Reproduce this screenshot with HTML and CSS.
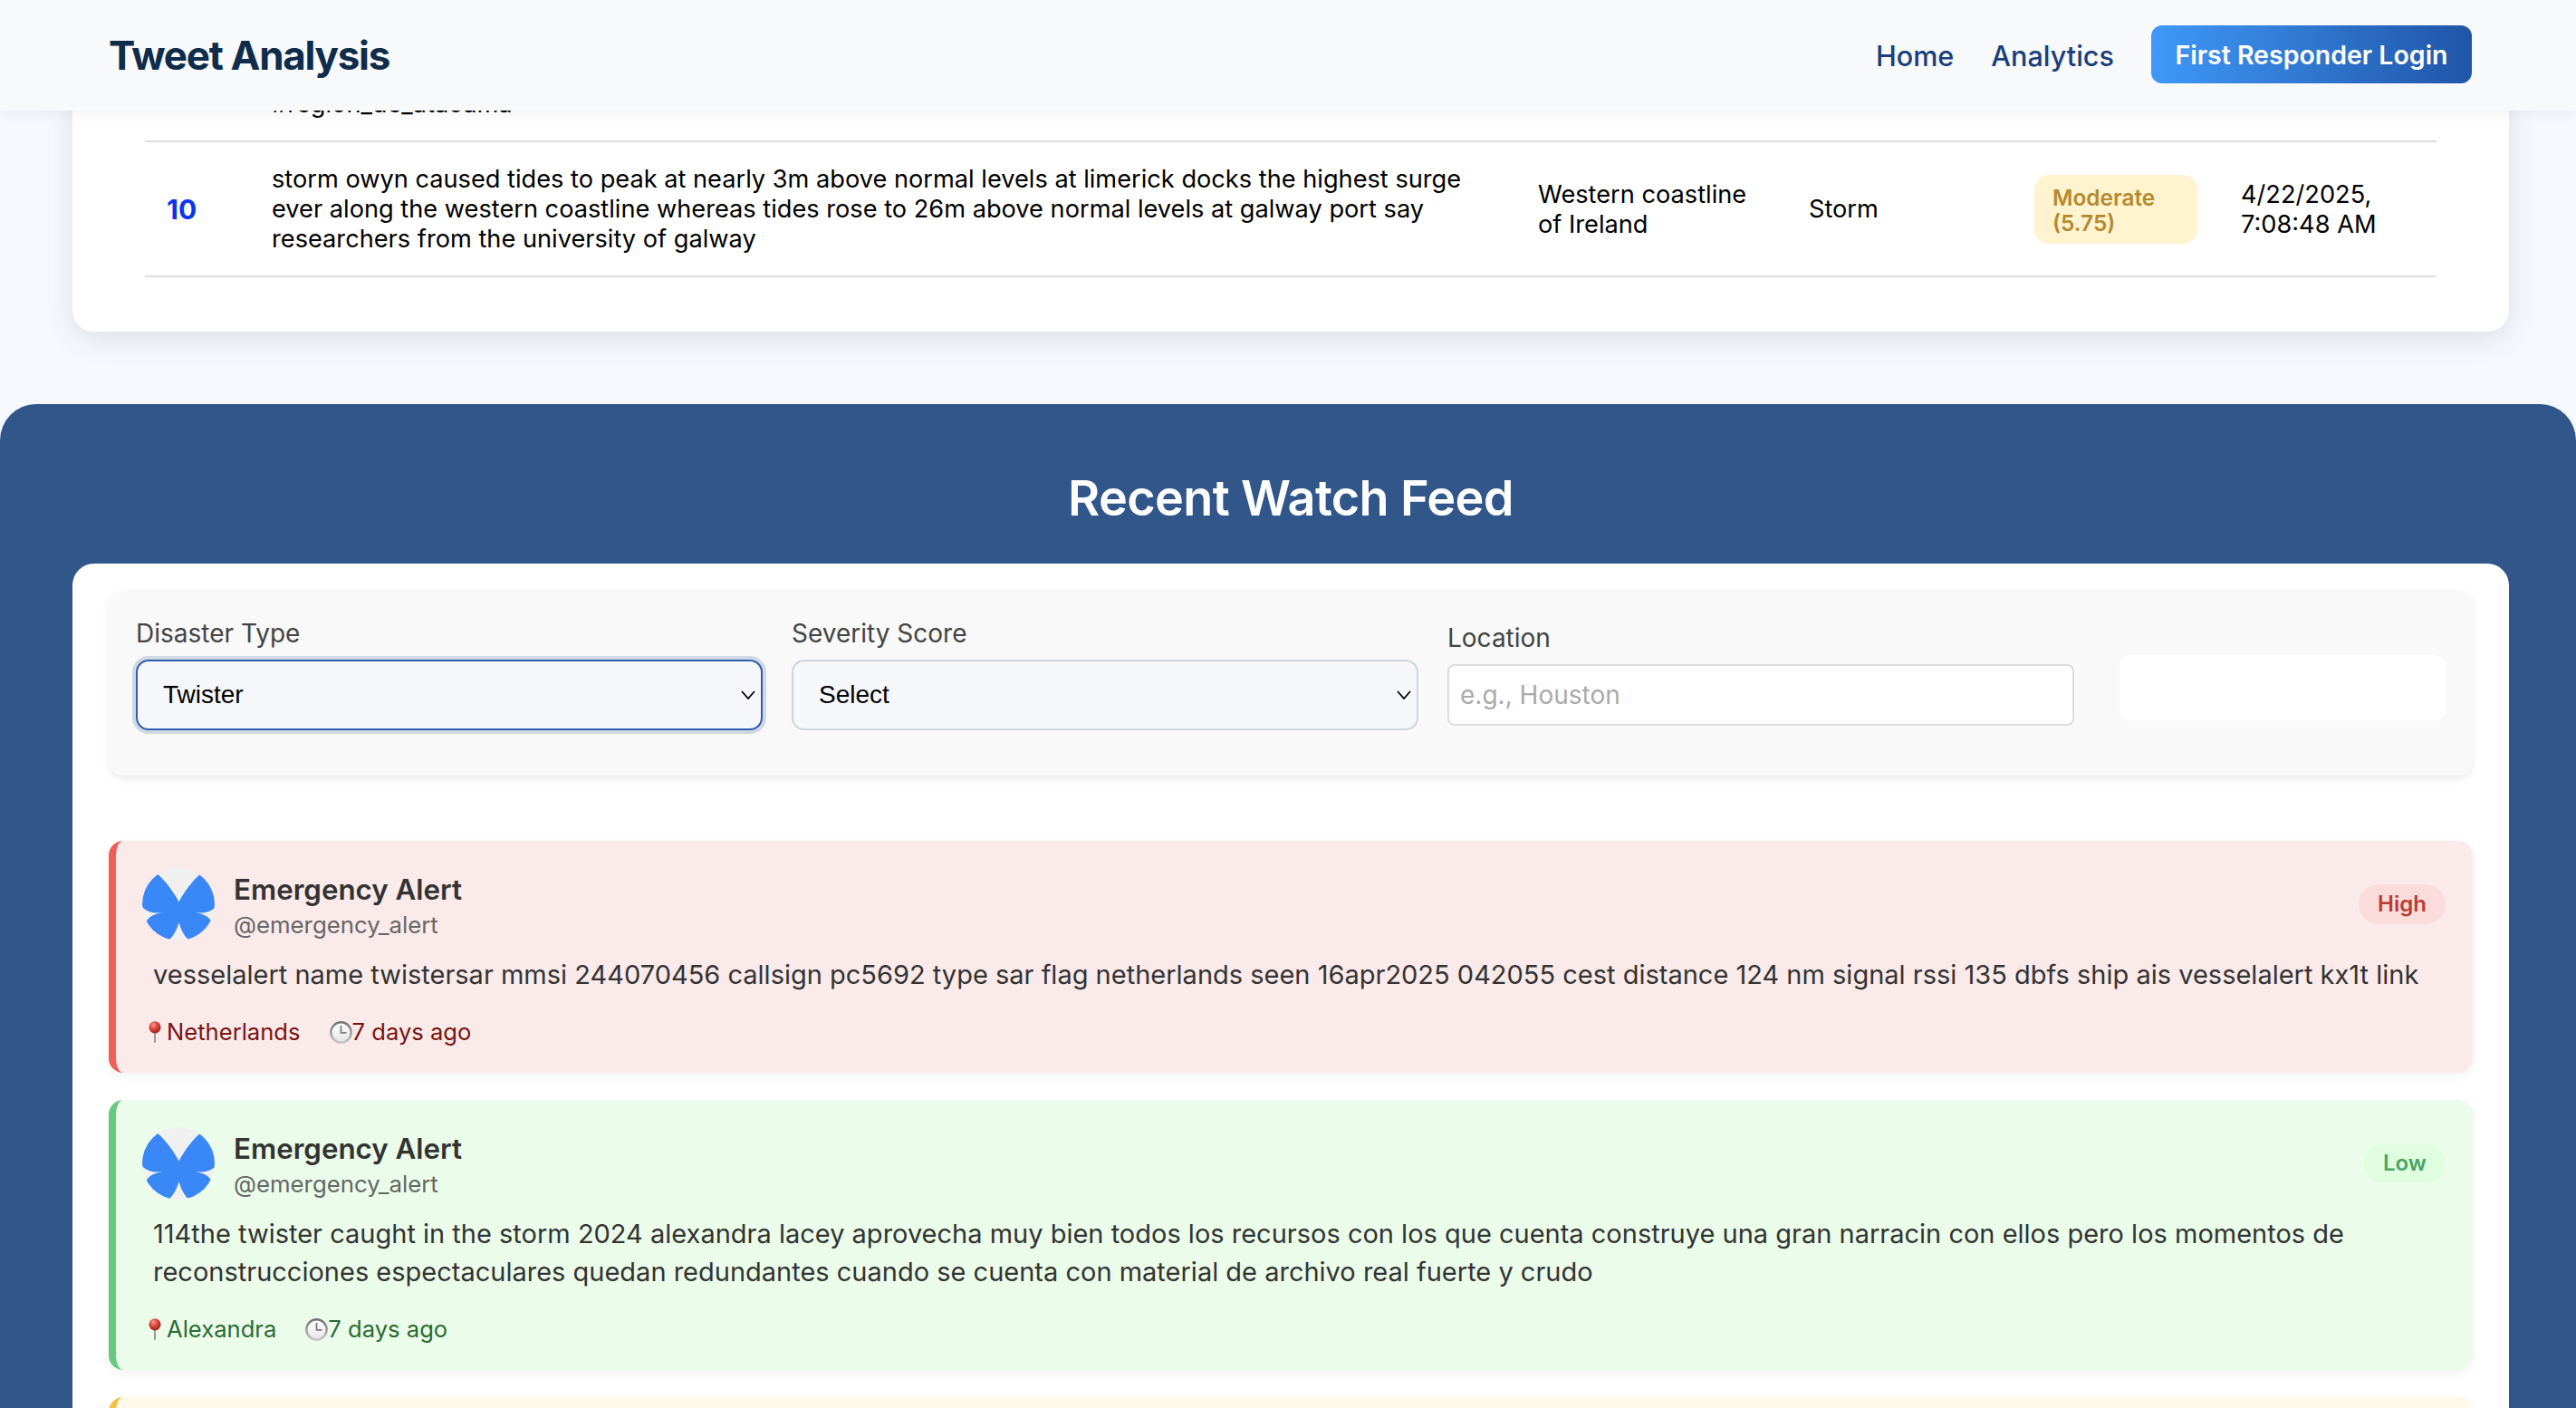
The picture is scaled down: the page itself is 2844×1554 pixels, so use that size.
FILE: index.html
```html
<!DOCTYPE html>
<html lang="en">
<head>
    <meta charset="UTF-8">
    <meta name="viewport" content="width=device-width, initial-scale=1.0">
    <title>Tweet Analysis</title>
    <link rel="stylesheet" href="styles.css">
</head>
<body>
    <svg class="icon-defs" width="0" height="0" aria-hidden="true">
        <defs>
            <radialGradient id="pinHead" cx="38%" cy="32%" r="70%">
                <stop offset="0" stop-color="#f59a8f"/>
                <stop offset="0.5" stop-color="#d9423a"/>
                <stop offset="1" stop-color="#a3231f"/>
            </radialGradient>
            <linearGradient id="clockRing" x1="0" y1="0" x2="0" y2="1">
                <stop offset="0" stop-color="#6f6f6f"/>
                <stop offset="1" stop-color="#c9c9c9"/>
            </linearGradient>
            <linearGradient id="clockFace" x1="0" y1="0" x2="0" y2="1">
                <stop offset="0" stop-color="#ffffff"/>
                <stop offset="1" stop-color="#e6e6e6"/>
            </linearGradient>
            <symbol id="butterfly" viewBox="0 0 600 530">
                <path d="m135.72 44.03c66.496 49.921 138.02 151.14 164.28 205.46 26.262-54.316 97.782-155.54 164.28-205.46 47.98-36.021 125.72-63.892 125.72 24.795 0 17.712-10.155 148.79-16.111 170.07-20.703 73.984-96.144 92.854-163.25 81.433 117.3 19.964 147.14 86.092 82.697 152.22-122.39 125.59-175.91-31.511-189.63-71.766-2.514-7.3797-3.6904-10.832-3.7077-7.8964-0.0174-2.9357-1.1937 0.51669-3.7077 7.8964-13.714 40.255-67.233 197.36-189.63 71.766-64.444-66.128-34.605-132.26 82.697-152.22-67.108 11.421-142.55-7.4491-163.25-81.433-5.9562-21.282-16.111-152.36-16.111-170.07 0-88.687 77.742-60.816 125.72-24.795z"/>
            </symbol>
            <symbol id="pin" viewBox="0 0 14 24">
                <rect x="6" y="8" width="2" height="16" rx="1" fill="#9a9a9a"/>
                <circle cx="7" cy="6.8" r="6.6" fill="url(#pinHead)"/>
            </symbol>
            <symbol id="clock" viewBox="0 0 25 25">
                <circle cx="12.5" cy="12.5" r="12.4" fill="url(#clockRing)"/>
                <circle cx="12.5" cy="12.5" r="10" fill="url(#clockFace)"/>
                <path d="M12.5 5v7.8h6" fill="none" stroke="#7d7d7d" stroke-width="1.8"/>
            </symbol>
        </defs>
    </svg>

    <header class="site-header">
        <h1 class="brand">Tweet Analysis</h1>
        <nav class="site-nav">
            <a href="#">Home</a>
            <a href="#">Analytics</a>
            <button class="login-btn" type="button">First Responder Login</button>
        </nav>
    </header>

    <section class="table-card">
        <table class="tweet-table">
            <colgroup>
                <col class="col-rank">
                <col class="col-text">
                <col class="col-location">
                <col class="col-type">
                <col class="col-severity">
                <col class="col-date">
            </colgroup>
            <tbody>
                <tr>
                    <td></td>
                    <td>#region_de_atacama</td>
                    <td></td>
                    <td></td>
                    <td></td>
                    <td></td>
                </tr>
                <tr>
                    <td class="rank">10</td>
                    <td>storm owyn caused tides to peak at nearly 3m above normal levels at limerick docks the highest surge ever along the western coastline whereas tides rose to 26m above normal levels at galway port say researchers from the university of galway</td>
                    <td>Western coastline of Ireland</td>
                    <td>Storm</td>
                    <td><span class="severity-tag">Moderate (5.75)</span></td>
                    <td>4/22/2025, 7:08:48 AM</td>
                </tr>
            </tbody>
        </table>
    </section>

    <section class="feed">
        <h2 class="feed-title">Recent Watch Feed</h2>
        <div class="feed-card">
            <form class="filters">
                <div class="field">
                    <label for="disasterType">Disaster Type</label>
                    <select id="disasterType" class="is-focused">
                        <option>Twister</option>
                    </select>
                </div>
                <div class="field">
                    <label for="severity">Severity Score</label>
                    <select id="severity">
                        <option>Select</option>
                    </select>
                </div>
                <div class="field">
                    <label for="location">Location</label>
                    <input id="location" type="text" placeholder="e.g., Houston">
                </div>
                <div class="blank-btn"></div>
            </form>

            <article class="alert alert-high">
                <div class="alert-head">
                    <div class="avatar"><svg><use href="#butterfly"/></svg></div>
                    <div class="author">
                        <span class="author-name">Emergency Alert</span>
                        <span class="author-handle">@emergency_alert</span>
                    </div>
                    <span class="level">High</span>
                </div>
                <p class="alert-text">vesselalert name twistersar mmsi 244070456 callsign pc5692 type sar flag netherlands seen 16apr2025 042055 cest distance 124 nm signal rssi 135 dbfs ship ais vesselalert kx1t link</p>
                <div class="alert-meta">
                    <span class="meta-item"><svg class="pin-icon"><use href="#pin"/></svg>Netherlands</span>
                    <span class="meta-item"><svg class="clock-icon"><use href="#clock"/></svg>7 days ago</span>
                </div>
            </article>

            <article class="alert alert-low">
                <div class="alert-head">
                    <div class="avatar"><svg><use href="#butterfly"/></svg></div>
                    <div class="author">
                        <span class="author-name">Emergency Alert</span>
                        <span class="author-handle">@emergency_alert</span>
                    </div>
                    <span class="level">Low</span>
                </div>
                <p class="alert-text">114the twister caught in the storm 2024 alexandra lacey aprovecha muy bien todos los recursos con los que cuenta construye una gran narracin con ellos pero los momentos de reconstrucciones espectaculares quedan redundantes cuando se cuenta con material de archivo real fuerte y crudo</p>
                <div class="alert-meta">
                    <span class="meta-item"><svg class="pin-icon"><use href="#pin"/></svg>Alexandra</span>
                    <span class="meta-item"><svg class="clock-icon"><use href="#clock"/></svg>7 days ago</span>
                </div>
            </article>

            <article class="alert alert-moderate"></article>
        </div>
    </section>
</body>
</html>
```

FILE: styles.css
```css
* {
    box-sizing: border-box;
}

html, body {
    height: 100%;
}

body {
    margin: 0;
    overflow: hidden;
    background-color: #f5f9ff;
    color: #333333;
    font-family: Inter, "Liberation Sans", sans-serif;
}

.icon-defs {
    display: block;
    height: 0;
}

.site-header {
    position: relative;
    z-index: 2;
    display: flex;
    justify-content: space-between;
    align-items: center;
    height: 122px;
    padding: 0 115px 0 120px;
    background-color: #f8f9fb;
    box-shadow: 0 4px 12px rgba(0, 0, 0, 0.05);
}

.brand {
    margin: 0;
    font-size: 44px;
    font-weight: 700;
    letter-spacing: -1.3px;
    color: #0f2d4a;
}

.site-nav {
    display: flex;
    align-items: center;
    gap: 41px;
}

.site-nav a {
    font-size: 30.6px;
    font-weight: 500;
    color: #1a3f7c;
    text-decoration: none;
}

.login-btn {
    width: 354px;
    height: 64px;
    margin-bottom: 2px;
    padding: 0;
    border: none;
    border-radius: 12px;
    background: linear-gradient(90deg, #3f98f8, #2055a7);
    color: #ffffff;
    font-family: inherit;
    font-size: 28.5px;
    font-weight: 600;
}

.table-card {
    margin: -60px 74px 0 80px;
    padding: 12px 80px 60px;
    border-radius: 24px;
    background-color: #ffffff;
    box-shadow: 0 8px 32px rgba(0, 0, 0, 0.1);
}

.tweet-table {
    width: 100%;
    table-layout: fixed;
    border-collapse: collapse;
    color: #000000;
    font-size: 27.2px;
}

.col-rank { width: 116px; }
.col-location { width: 299px; }
.col-type { width: 249px; }
.col-severity { width: 228px; }
.col-date { width: 240px; }

.tweet-table td {
    padding: 24px;
    border-bottom: 2px solid #dddddd;
    vertical-align: middle;
}

.tweet-table .rank {
    color: #0a35f0;
    font-size: 30px;
    font-weight: 700;
}

.severity-tag {
    display: block;
    padding: 11px 20px 9px;
    border-radius: 16px;
    background-color: #fff4cf;
    color: #b58a2e;
    font-size: 24.4px;
    font-weight: 600;
    line-height: 28px;
}

.feed {
    height: 1108px;
    margin-top: 80px;
    padding: 0 74px 0 80px;
    border-radius: 40px 40px 0 0;
    background-color: #30568a;
}

.feed-title {
    height: 176px;
    margin: 0;
    padding-top: 70px;
    color: #ffffff;
    font-size: 54px;
    font-weight: 600;
    letter-spacing: -0.65px;
    line-height: 68px;
    text-align: center;
}

.feed-card {
    height: 932px;
    padding: 29px 40px;
    border-radius: 24px 24px 0 0;
    background-color: #ffffff;
}

.filters {
    display: flex;
    align-items: center;
    gap: 32px;
    height: 205px;
    margin-bottom: 72px;
    padding: 0 30px;
    border-radius: 16px;
    background-color: #f9f9f9;
    box-shadow: 0 4px 8px rgba(0, 0, 0, 0.08);
}

.field {
    flex: 1;
    min-width: 0;
    margin-bottom: 20px;
}

.field label {
    display: block;
    margin-bottom: 12px;
    color: #444444;
    font-size: 28px;
    font-weight: 400;
}

/* native arrow renders too small at this size, so draw the chevron */
.field select {
    display: block;
    width: 100%;
    height: 78px;
    padding: 0 0 0 28px;
    border: 2px solid #cdd4dc;
    border-radius: 14px;
    appearance: none;
    background-color: #f5f7fb;
    background-image: url("data:image/svg+xml,%3Csvg xmlns='http://www.w3.org/2000/svg' width='16' height='10'%3E%3Cpath d='M1 1l7 8 7-8' fill='none' stroke='%23000' stroke-width='1.8'/%3E%3C/svg%3E");
    background-repeat: no-repeat;
    background-position: right 6px center;
    color: #000000;
    font-family: "Liberation Sans", Arial, sans-serif;
    font-size: 28px;
}

.field select.is-focused {
    border-color: #2f5fae;
    box-shadow: 0 0 0 4px rgba(47, 85, 138, 0.2);
}

.field input {
    display: block;
    width: 100%;
    height: 68px;
    padding: 0 12px;
    border: 2px solid #dddddd;
    border-radius: 8px;
    background-color: #ffffff;
    font-family: inherit;
    font-size: 28px;
}

.field input::placeholder {
    color: #aaaaaa;
}

.blank-btn {
    flex: none;
    width: 360px;
    height: 72px;
    margin-left: 18px;
    margin-top: 11px;
    border-radius: 12px;
    background-color: #ffffff;
}

.alert {
    margin-bottom: 30px;
    padding: 30px 30px 28px 29px;
    border-left: 8px solid;
    border-radius: 16px;
    box-shadow: 0 4px 12px rgba(0, 0, 0, 0.05);
}

.alert-high {
    border-color: #ef5f57;
    background-color: #fbeaea;
}

.alert-low {
    border-color: #66c97d;
    background-color: #ebfdea;
}

.alert-moderate {
    height: 200px;
    border-color: #f0c040;
    background-color: #fff9e8;
}

.alert-head {
    display: flex;
    align-items: center;
    gap: 21px;
}

.avatar {
    display: flex;
    justify-content: center;
    align-items: center;
    flex: none;
    width: 80px;
    height: 80px;
    overflow: hidden;
    border-radius: 50%;
    background-color: #f0f0f0;
}

.avatar svg {
    display: block;
    flex: none;
    width: 97px;
    height: 86px;
    fill: #3a87f8;
}

.author {
    display: flex;
    flex-direction: column;
    flex: 1;
    gap: 1px;
}

.author-name {
    padding-top: 2px;
    font-size: 31.3px;
    font-weight: 600;
    line-height: 42px;
}

.author-handle {
    color: #666666;
    font-size: 25.8px;
    line-height: 34px;
}

.level {
    padding: 0 21px;
    border-radius: 22px;
    font-size: 24px;
    font-weight: 600;
    line-height: 44px;
}

.alert-high .level {
    background-color: #fbdcdc;
    color: #b93c34;
}

.alert-low .level {
    background-color: #e1fde0;
    color: #4aa562;
}

.alert-text {
    margin: 17px 0 25px;
    padding-left: 12px;
    font-size: 29px;
    line-height: 42px;
}

.alert-meta {
    display: flex;
    gap: 32px;
    padding-left: 7px;
    font-size: 25.6px;
    line-height: 34px;
}

.alert-high .alert-meta {
    color: #7a1310;
}

.alert-low .alert-meta {
    color: #2a6b33;
}

.meta-item {
    display: flex;
    align-items: center;
}

.pin-icon {
    width: 14px;
    height: 24px;
    margin-right: 6px;
}

.clock-icon {
    width: 25px;
    height: 25px;
}
```
